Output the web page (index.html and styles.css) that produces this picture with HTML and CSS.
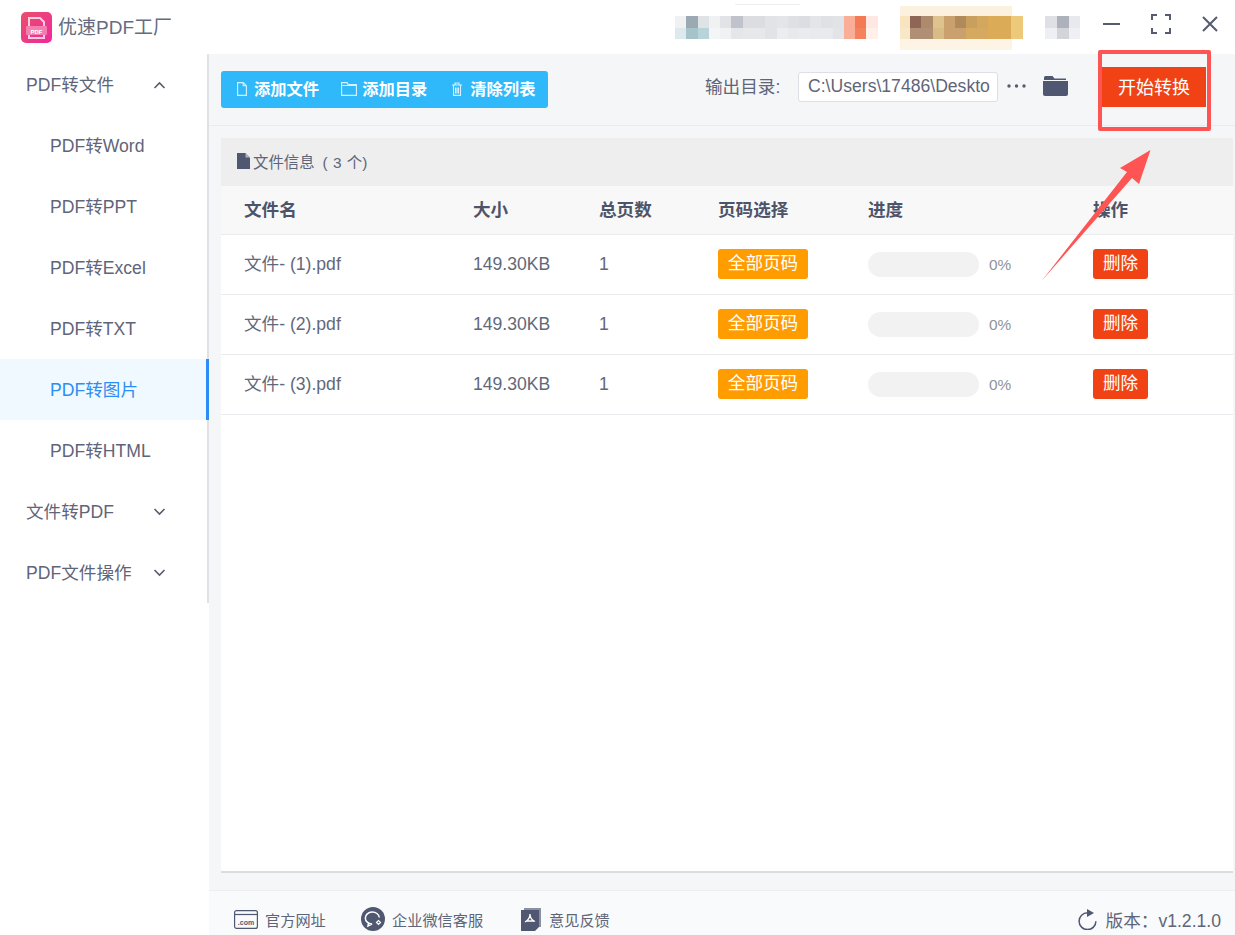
FILE: index.html
```html
<!DOCTYPE html>
<html lang="zh-CN">
<head>
  <meta charset="UTF-8" />
  <title>优速PDF工厂</title>
  <link rel="stylesheet" href="styles.css">
</head>
<body>
  <div class="app">
    <div class="titlebar">
      <div class="logo">
        <svg width="31" height="31" viewBox="0 0 31 31">
          <defs>
            <linearGradient id="logoBg" x1="0" y1="0" x2="1" y2="1">
              <stop offset="0" stop-color="#e8506a"/>
              <stop offset="1" stop-color="#f2289c"/>
            </linearGradient>
          </defs>
          <rect width="31" height="31" rx="5" fill="url(#logoBg)"/>
          <path d="M8 14V6h11l4 4v4" fill="none" stroke="#fff" stroke-opacity=".75" stroke-width="2"/>
          <rect x="5" y="14" width="21" height="9" rx="1" fill="#fff" fill-opacity=".35"/>
          <path d="M8 23v3h15v-3" fill="none" stroke="#fff" stroke-opacity=".75" stroke-width="2"/>
          <text x="15.5" y="21.5" class="logo-text" text-anchor="middle">PDF</text>
        </svg>
      </div>
      <span class="app-name">优速PDF工厂</span>
      <svg class="mosaic" width="405" height="54" viewBox="675 0 405 54">
        <rect x="735" y="4" width="65" height="1" fill="#eeeeee"/>
        <rect x="900" y="6" width="112" height="10" fill="#fcf1df"/>
        <rect x="900" y="39" width="112" height="11" fill="#fdf4e5"/>
        <g>
          <rect x="675" y="16" width="12" height="12" fill="#f0f1f3"/>
          <rect x="686" y="16" width="12" height="12" fill="#9aa9b2"/>
          <rect x="698" y="16" width="11" height="12" fill="#dfe3e6"/>
          <rect x="709" y="16" width="11" height="12" fill="#f0f1f3"/>
          <rect x="720" y="16" width="11" height="12" fill="#e2e3e6"/>
          <rect x="731" y="16" width="12" height="12" fill="#c0c3cc"/>
          <rect x="743" y="16" width="23" height="12" fill="#dcdde1"/>
          <rect x="765" y="16" width="12" height="12" fill="#e2e3e7"/>
          <rect x="777" y="16" width="11" height="12" fill="#e4e5e9"/>
          <rect x="788" y="16" width="11" height="12" fill="#dfe0e4"/>
          <rect x="799" y="16" width="11" height="12" fill="#dcdde2"/>
          <rect x="810" y="16" width="11" height="12" fill="#e4e5e8"/>
          <rect x="821" y="16" width="12" height="12" fill="#e0e1e5"/>
          <rect x="833" y="16" width="11" height="12" fill="#e2e3e6"/>
          <rect x="844" y="16" width="11" height="12" fill="#f9ae98"/>
          <rect x="855" y="16" width="11" height="12" fill="#f47a55"/>
          <rect x="866" y="16" width="12" height="12" fill="#ffe8e3"/>
          <rect x="675" y="28" width="12" height="11" fill="#dde9ec"/>
          <rect x="686" y="28" width="12" height="11" fill="#a6c3c9"/>
          <rect x="698" y="28" width="11" height="11" fill="#b8d4d8"/>
          <rect x="709" y="28" width="11" height="11" fill="#f4f5f6"/>
          <rect x="720" y="28" width="11" height="11" fill="#f0f1f2"/>
          <rect x="731" y="28" width="12" height="11" fill="#e5e6e9"/>
          <rect x="743" y="28" width="23" height="11" fill="#e7e8ea"/>
          <rect x="765" y="28" width="12" height="11" fill="#e2e3e7"/>
          <rect x="777" y="28" width="11" height="11" fill="#ecedf0"/>
          <rect x="788" y="28" width="11" height="11" fill="#e8e9eb"/>
          <rect x="799" y="28" width="11" height="11" fill="#eaebee"/>
          <rect x="810" y="28" width="23" height="11" fill="#e9eaed"/>
          <rect x="833" y="28" width="11" height="11" fill="#e3e4e7"/>
          <rect x="844" y="28" width="11" height="11" fill="#f9ae98"/>
          <rect x="855" y="28" width="11" height="11" fill="#f5825f"/>
          <rect x="866" y="28" width="12" height="11" fill="#fff0ea"/>
        </g>
        <g>
          <rect x="900" y="16" width="10" height="12" fill="#f9e4c0"/>
          <rect x="910" y="16" width="11" height="12" fill="#8f6655"/>
          <rect x="921" y="16" width="12" height="12" fill="#ae8a6c"/>
          <rect x="933" y="16" width="11" height="12" fill="#dfc38e"/>
          <rect x="944" y="16" width="11" height="12" fill="#c9a06e"/>
          <rect x="955" y="16" width="11" height="12" fill="#b08a5a"/>
          <rect x="966" y="16" width="11" height="12" fill="#c99f60"/>
          <rect x="977" y="16" width="11" height="12" fill="#d4a75e"/>
          <rect x="988" y="16" width="23" height="12" fill="#dbab58"/>
          <rect x="1011" y="16" width="12" height="12" fill="#efc97a"/>
          <rect x="900" y="28" width="10" height="11" fill="#f9e8c8"/>
          <rect x="910" y="28" width="23" height="11" fill="#b08f75"/>
          <rect x="933" y="28" width="11" height="11" fill="#d8bc85"/>
          <rect x="944" y="28" width="22" height="11" fill="#c9a06e"/>
          <rect x="966" y="28" width="22" height="11" fill="#d5aa60"/>
          <rect x="988" y="28" width="23" height="11" fill="#dbab58"/>
          <rect x="1011" y="28" width="12" height="11" fill="#efc97a"/>
        </g>
        <g>
          <rect x="1045" y="16" width="12" height="12" fill="#dfe0e6"/>
          <rect x="1057" y="16" width="12" height="12" fill="#adb1bc"/>
          <rect x="1069" y="16" width="11" height="12" fill="#e8e9ee"/>
          <rect x="1045" y="28" width="12" height="11" fill="#eeeff2"/>
          <rect x="1057" y="28" width="12" height="11" fill="#d2d4da"/>
          <rect x="1069" y="28" width="11" height="11" fill="#eff0f3"/>
        </g>
      </svg>
      <div class="win-btns">
        <svg width="17" height="16" viewBox="0 0 17 16"><path d="M0 8h17" stroke="#555c70" stroke-width="2"/></svg>
        <svg width="20" height="20" viewBox="0 0 20 20"><path d="M1 6V1h5M14 1h5v5M19 14v5h-5M6 19H1v-5" fill="none" stroke="#555c70" stroke-width="2"/></svg>
        <svg width="16" height="16" viewBox="0 0 16 16"><path d="M1 1l14 14M15 1L1 15" stroke="#555c70" stroke-width="2"/></svg>
      </div>
    </div>

    <div class="content">
      <div class="sidebar">
        <div class="menu-item group">PDF转文件
          <svg class="chevron" width="13" height="8" viewBox="0 0 13 8"><path d="M1.5 7l5-5 5 5" fill="none" stroke="#555c70" stroke-width="1.6"/></svg>
        </div>
        <div class="menu-item">PDF转Word</div>
        <div class="menu-item">PDF转PPT</div>
        <div class="menu-item">PDF转Excel</div>
        <div class="menu-item">PDF转TXT</div>
        <div class="menu-item active">PDF转图片</div>
        <div class="menu-item">PDF转HTML</div>
        <div class="menu-item group">文件转PDF
          <svg class="chevron" width="13" height="8" viewBox="0 0 13 8"><path d="M1.5 1l5 5 5-5" fill="none" stroke="#555c70" stroke-width="1.6"/></svg>
        </div>
        <div class="menu-item group">PDF文件操作
          <svg class="chevron" width="13" height="8" viewBox="0 0 13 8"><path d="M1.5 1l5 5 5-5" fill="none" stroke="#555c70" stroke-width="1.6"/></svg>
        </div>
      </div>

      <div class="main">
        <div class="toolbar">
          <div class="btn-group">
            <span class="tool-btn btn-file">
              <svg width="10" height="14" viewBox="0 0 10 14"><path d="M.6.6h5.600l3.200 3.200v9.600H.6zM6.200.6v3.200h3.200" fill="none" stroke="#d8f1fe" stroke-width="1.100"/></svg>
              添加文件
            </span>
            <span class="tool-btn btn-dir">
              <svg width="16" height="14" viewBox="0 0 16 14"><path d="M.6 13.400V.6h5.400l1.300 2h8.100v10.800zM.6 3.500h15" fill="none" stroke="#d8f1fe" stroke-width="1.100"/></svg>
              添加目录
            </span>
            <span class="tool-btn btn-clear">
              <svg width="10" height="14" viewBox="0 0 10 14"><path d="M0 3h10M3 3V1h4v2M1.500 3v10.400h7V3M3.500 5.500v6M5 5.500v6M6.500 5.500v6" fill="none" stroke="#d8f1fe" stroke-width="1.100"/></svg>
              清除列表
            </span>
          </div>
          <span class="out-label">输出目录:</span>
          <div class="out-path">C:\Users\17486\Deskto</div>
          <svg class="dots" width="19" height="4" viewBox="0 0 19 4"><circle cx="2" cy="2" r="1.700" fill="#555c70"/><circle cx="9.500" cy="2" r="1.700" fill="#555c70"/><circle cx="17" cy="2" r="1.700" fill="#555c70"/></svg>
          <svg class="folder" width="25" height="21" viewBox="0 0 25 21"><path d="M1 2.500Q1 1 2.500 1h7l2 2.500H23V5H1z" fill="#505871"/><path d="M0 6h25v13q0 2-2 2H2q-2 0-2-2z" fill="#505871"/></svg>
          <button class="start-btn">开始转换</button>
        </div>

        <div class="panel">
          <div class="panel-title">
            <svg width="13" height="16" viewBox="0 0 13 16"><path d="M0 0h8.500L13 4.500V16H0z" fill="#505871"/><path d="M8.500 0v4.500H13" fill="#eee" fill-opacity=".6"/></svg>
            <span>文件信息</span><span class="count">( 3 个)</span>
          </div>
          <div class="row head">
            <div>文件名</div><div>大小</div><div>总页数</div><div>页码选择</div><div>进度</div><div>操作</div>
          </div>
          <div class="row">
            <div class="file-name">文件- (1).pdf</div><div>149.30KB</div><div>1</div>
            <div class="tag-cell"><span class="tag orange">全部页码</span></div>
            <div class="progress"><span class="track"></span><span class="pct">0%</span></div>
            <div class="tag-cell"><span class="tag red">删除</span></div>
          </div>
          <div class="row">
            <div class="file-name">文件- (2).pdf</div><div>149.30KB</div><div>1</div>
            <div class="tag-cell"><span class="tag orange">全部页码</span></div>
            <div class="progress"><span class="track"></span><span class="pct">0%</span></div>
            <div class="tag-cell"><span class="tag red">删除</span></div>
          </div>
          <div class="row">
            <div class="file-name">文件- (3).pdf</div><div>149.30KB</div><div>1</div>
            <div class="tag-cell"><span class="tag orange">全部页码</span></div>
            <div class="progress"><span class="track"></span><span class="pct">0%</span></div>
            <div class="tag-cell"><span class="tag red">删除</span></div>
          </div>
        </div>

        <div class="footer">
          <span class="foot-link link-site">
            <svg width="24" height="19" viewBox="0 0 24 19"><rect x=".6" y=".6" width="22.800" height="17.800" rx="2" fill="none" stroke="#505871" stroke-width="1.200"/><path d="M1 4.500h22" stroke="#505871" stroke-width="1.200"/><text x="12" y="15" class="com-text" text-anchor="middle">.com</text></svg>
            官方网址
          </span>
          <span class="foot-link link-chat">
            <svg width="24" height="24" viewBox="0 0 24 24"><circle cx="12" cy="12" r="12" fill="#505871"/><path d="M18.300 10.500A7 6 0 1 0 11 17L7 19l.5-3.500" fill="none" stroke="#fff" stroke-width="1.500"/><path d="M15.500 15.500l2-2 2 2-2 2z" fill="none" stroke="#fff" stroke-width="1.200"/></svg>
            企业微信客服
          </span>
          <span class="foot-link link-feedback">
            <svg width="20" height="23" viewBox="0 0 20 23"><path d="M3 0h17v19h-2V2H3z" fill="#8a90a0"/><path d="M0 2h18v17l-4 4H0z" fill="#505871"/><path d="M9 6c0 3-1.500 6-5 8M9 6c0 3 1.500 6 5 7.500M5 13h8" fill="none" stroke="#fff" stroke-width="1.300"/></svg>
            意见反馈
          </span>
          <span class="version">
            <svg width="19" height="21" viewBox="0 0 19 21"><path d="M9.500 3.800A8.400 8.400 0 1 0 17.900 12.200" fill="none" stroke="#505871" stroke-width="1.500"/><path d="M9 0l7 4-7 4z" fill="#505871"/></svg>
            版本&#xFF1A;v1.2.1.0
          </span>
        </div>
      </div>
    </div>

    <div class="red-frame"></div>
    <svg class="arrow" width="110" height="132" viewBox="1042 150 110 132"><path d="M1150.500 150L1120 168l7 4-85 108.500 90-102.500 7 6z" fill="#fe5454"/></svg>
  </div>
</body>
</html>
```

FILE: styles.css
```css
* {
  box-sizing: border-box;
}
html, body {
  margin: 0;
  padding: 0;
  overflow: hidden;
}
body {
  font-family: "Liberation Sans", "Noto Sans CJK SC", sans-serif;
  color: #5b6175;
  background: #ffffff;
}
.app {
  position: relative;
  width: 1235px;
  height: 935px;
  overflow: hidden;
}
.titlebar {
  display: flex;
  align-items: center;
  height: 54px;
  padding-left: 21px;
  background: #ffffff;
}
.titlebar > * {
  flex: none;
}
.logo {
  width: 31px;
  height: 31px;
  margin-right: 6px;
  margin-top: 1px;
}
.logo svg {
  display: block;
}
.logo-text {
  font-size: 6px;
  font-weight: bold;
  fill: #fff;
}
.app-name {
  width: 617px;
  padding-bottom: 4px;
  font-size: 19px;
  color: #666c80;
}
.mosaic {
  display: block;
}
.win-btns {
  display: flex;
  align-items: center;
  margin-left: 23px;
  margin-top: -6px;
}
.win-btns svg {
  display: block;
  flex: none;
  margin-right: 31px;
}
.content {
  display: flex;
  height: 881px;
}
.sidebar {
  width: 209px;
  flex: none;
  background: linear-gradient(#dfe1e5, #dfe1e5) no-repeat 207px 0 / 2px 549px #ffffff;
}
.menu-item {
  position: relative;
  display: flex;
  align-items: center;
  height: 61px;
  padding-left: 50px;
  padding-bottom: 2px;
  font-size: 17.6px;
  color: #5f6579;
}
.menu-item.group {
  padding-left: 26px;
}
.menu-item.active {
  color: #2c8df4;
  background: #f0f9ff;
  border-right: 3px solid #2c8df4;
}
.chevron {
  position: absolute;
  left: 153px;
  top: 27px;
}
.main {
  flex: 1;
  display: flex;
  flex-direction: column;
  background: #f5f6f8;
  min-width: 0;
}
.toolbar {
  display: flex;
  align-items: center;
  flex: none;
  height: 72px;
  padding-left: 12px;
  padding-bottom: 5px;
  border-bottom: 1px solid #e9ebee;
}
.btn-group {
  display: flex;
  align-items: center;
  flex: none;
  width: 327px;
  height: 37px;
  margin-top: 5px;
  margin-right: 157px;
  padding-left: 16px;
  padding-bottom: 3px;
  border-radius: 3px;
  background: #2fb8fa;
}
.tool-btn {
  display: flex;
  align-items: center;
  font-size: 16.300px;
  font-weight: bold;
  color: #ffffff;
  white-space: nowrap;
}
.tool-btn svg {
  margin-top: 2px;
}
.btn-file {
  margin-right: 22px;
}
.btn-dir {
  margin-right: 25px;
}
.btn-file svg {
  margin-right: 7px;
}
.btn-dir svg {
  margin-right: 5px;
}
.btn-clear svg {
  margin-right: 8px;
}
.out-label {
  flex: none;
  width: 93px;
  margin-top: -3px;
  font-size: 17.600px;
  color: #5f6579;
}
.out-path {
  flex: none;
  width: 200px;
  height: 30px;
  padding-left: 9px;
  line-height: 26px;
  border: 1px solid #dcdfe6;
  border-radius: 3px;
  background: #ffffff;
  font-size: 17.600px;
  color: #5f6579;
  overflow: hidden;
  white-space: nowrap;
}
.dots {
  flex: none;
  margin-left: 9px;
  margin-top: -2px;
}
.folder {
  flex: none;
  margin-left: 17px;
  margin-top: -3px;
}
.start-btn {
  flex: none;
  width: 104px;
  height: 40px;
  margin-left: 34px;
  border: none;
  background: #f04214;
  color: #ffffff;
  font-family: inherit;
  font-size: 18px;
  padding: 0 0 2px;
}
.panel {
  width: 1012px;
  height: 735px;
  margin: 12px 0 0 12px;
  background: #ffffff;
  border-bottom: 2px solid #dcdcdc;
  flex: none;
}
.panel-title {
  display: flex;
  align-items: center;
  height: 48px;
  padding-left: 16px;
  padding-bottom: 2px;
  background: #eeeeee;
  font-size: 15.400px;
  color: #5f6579;
}
.panel-title svg {
  margin-right: 3px;
}
.count {
  margin-left: 8px;
  word-spacing: 1px;
}
.row {
  display: grid;
  grid-template-columns: 229px 126px 119px 150px 225px 1fr;
  align-items: center;
  height: 60px;
  padding-left: 23px;
  border-bottom: 1px solid #e9ebee;
  font-size: 17.600px;
  color: #62687a;
}
.row.head {
  height: 49px;
  padding-bottom: 3px;
  background: #f8f8f8;
  font-weight: bold;
  color: #4d5469;
}
.file-name {
  margin-bottom: 4px;
}
.tag-cell {
  display: flex;
  margin-bottom: 1px;
}
.tag {
  display: block;
  height: 30px;
  line-height: 29px;
  border-radius: 3px;
  color: #ffffff;
  text-align: center;
}
.tag.orange {
  width: 90px;
  background: #ff9c00;
}
.tag.red {
  width: 55px;
  background: #f04214;
}
.progress {
  display: flex;
  align-items: center;
}
.track {
  width: 111px;
  height: 25px;
  border-radius: 13px;
  background: #f2f2f2;
}
.pct {
  margin-left: 10px;
  font-size: 15.400px;
  color: #8f939e;
}
.footer {
  position: relative;
  display: flex;
  align-items: center;
  height: 45px;
  margin-top: 17px;
  padding-left: 25px;
  padding-top: 12px;
  background: #f9fafb;
  border-top: 1px solid #eceef1;
  font-size: 15.200px;
  color: #5f6579;
  flex: none;
}
.foot-link {
  display: flex;
  align-items: center;
}
.foot-link svg {
  flex: none;
}
.link-site {
  width: 127px;
}
.link-site svg {
  margin-right: 7px;
}
.link-chat {
  width: 160px;
}
.link-chat svg {
  margin-right: 7px;
}
.link-feedback svg {
  margin-right: 8px;
}
.version {
  display: flex;
  align-items: center;
  margin-left: auto;
  padding-right: 14px;
  font-size: 17.600px;
  white-space: nowrap;
}
.version svg {
  margin-right: 9px;
}
.com-text {
  font-size: 7px;
  font-weight: bold;
  fill: #505871;
}
.red-frame {
  position: absolute;
  left: 1098px;
  top: 50px;
  width: 113px;
  height: 81px;
  border: 4px solid #fe5454;
  border-radius: 2px;
}
.arrow {
  position: absolute;
  left: 1042px;
  top: 150px;
}
```
